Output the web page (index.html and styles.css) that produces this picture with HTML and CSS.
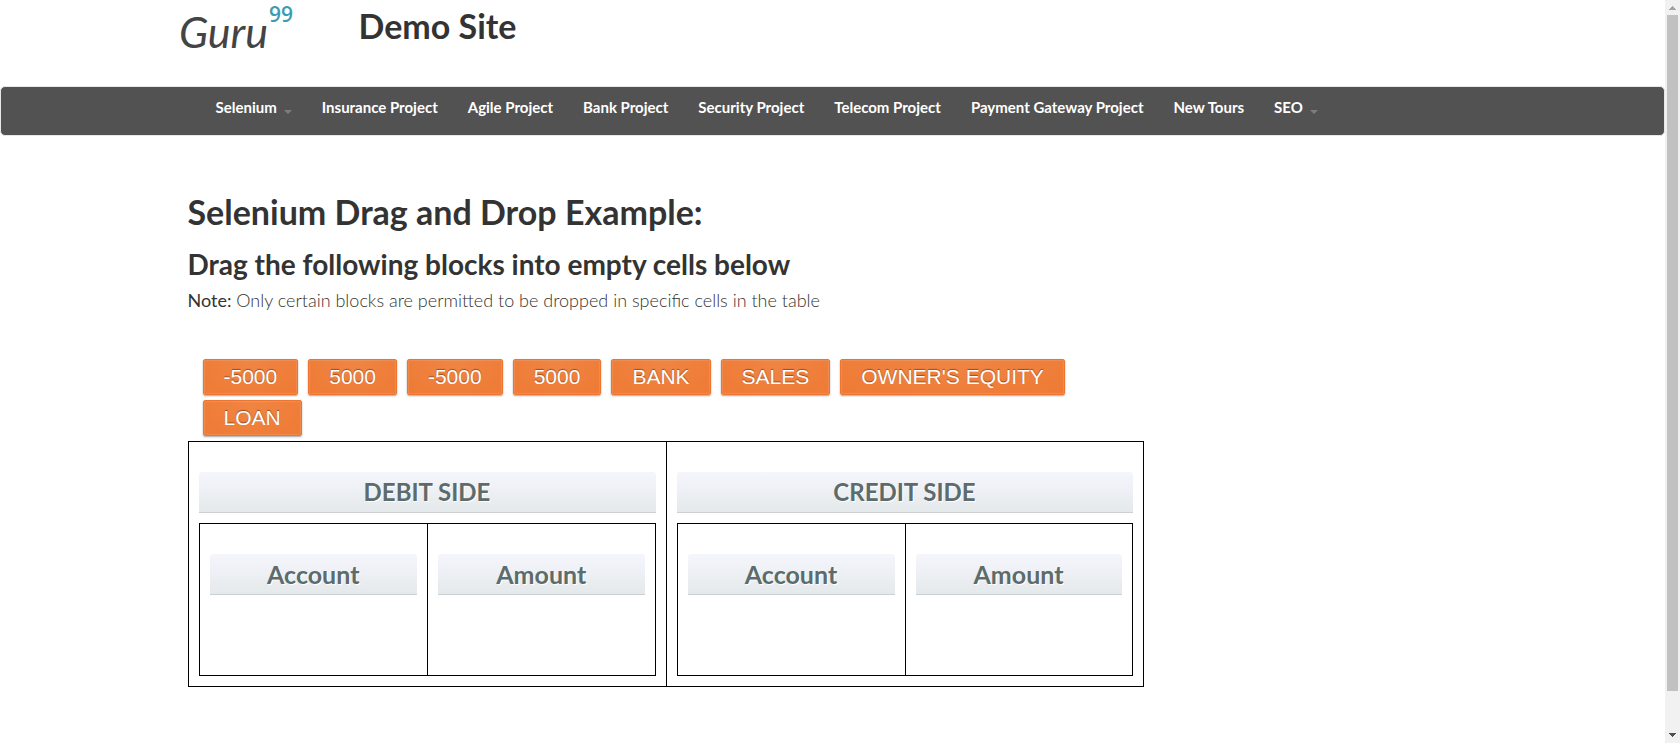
FILE: index.html
```html
<!DOCTYPE html>
<html lang="en">
<head>
<meta charset="utf-8">
<title>Demo Site</title>
<link rel="stylesheet" href="styles.css">
</head>
<body>
<div class="page">
  <header class="container masthead">
    <a class="logo" href="#" aria-label="Guru99">
      <svg width="120" height="56" viewBox="0 0 120 56">
        <text class="logo-word" x="0" y="48">Guru</text>
        <text class="logo-number" x="90" y="22">99</text>
      </svg>
    </a>
    <h2 class="site-title">Demo Site</h2>
  </header>
  <nav class="navbar">
    <ul class="container menu">
      <li><a class="dropdown" href="#">Selenium</a></li>
      <li><a href="#">Insurance Project</a></li>
      <li><a href="#">Agile Project</a></li>
      <li><a href="#">Bank Project</a></li>
      <li><a href="#">Security Project</a></li>
      <li><a href="#">Telecom Project</a></li>
      <li><a href="#">Payment Gateway Project</a></li>
      <li><a href="#">New Tours</a></li>
      <li><a class="dropdown" href="#">SEO</a></li>
    </ul>
  </nav>
  <main class="container content">
    <h1>Selenium Drag and Drop Example:</h1>
    <h2>Drag the following blocks into empty cells below</h2>
    <p class="note"><b>Note:</b> Only certain blocks are permitted to be dropped in specific cells in the table</p>
    <div class="exercise">
      <ul class="blocks">
        <li><a class="block" href="#">-5000</a></li>
        <li><a class="block" href="#">5000</a></li>
        <li><a class="block" href="#">-5000</a></li>
        <li><a class="block" href="#">5000</a></li>
        <li><a class="block" href="#">BANK</a></li>
        <li><a class="block" href="#">SALES</a></li>
        <li><a class="block" href="#">OWNER'S EQUITY</a></li>
        <li><a class="block" href="#">LOAN</a></li>
      </ul>
      <div class="ledger">
        <section class="side">
          <h3 class="bar">DEBIT SIDE</h3>
          <table class="entries">
            <thead><tr><th><div class="bar">Account</div></th><th><div class="bar">Amount</div></th></tr></thead>
            <tbody><tr><td></td><td></td></tr></tbody>
          </table>
        </section>
        <section class="side">
          <h3 class="bar">CREDIT SIDE</h3>
          <table class="entries">
            <thead><tr><th><div class="bar">Account</div></th><th><div class="bar">Amount</div></th></tr></thead>
            <tbody><tr><td></td><td></td></tr></tbody>
          </table>
        </section>
      </div>
    </div>
  </main>
</div>
<div class="scrollbar" aria-hidden="true">
  <svg width="7" height="4" viewBox="0 0 7 4"><path fill="#a3a3a3" d="M3 0h1v1h1v1h1v1h1v1H0V3h1V2h1V1h1z"/></svg>
  <div class="thumb"></div>
  <svg width="7" height="4" viewBox="0 0 7 4"><path fill="#505050" d="M0 0h7v1H6v1H5v1H4v1H3V3H2V2H1V1H0z"/></svg>
</div>
</body>
</html>
```
FILE: styles.css
```css
* { box-sizing: border-box; }

body {
  margin: 0;
  display: flex;
  min-height: 100vh;
  background: #fff;
  color: #333;
  font-family: Lato, "Open Sans", sans-serif;
}

h1, h2, h3, p, ul { margin: 0; padding: 0; }
ul { list-style: none; }
a { text-decoration: none; }

.page { flex: 1; min-width: 0; }

.container {
  width: 100%;
  max-width: 1290px;
  margin: 0 auto;
}

.masthead {
  display: flex;
  align-items: flex-start;
  height: 86px;
}

.logo {
  width: 180px;
  margin-left: -9px;
}
.logo svg { display: block; }
.logo-word { font: italic 43px Lato, sans-serif; fill: #444; }
.logo-number { font: 600 21px "Open Sans", sans-serif; fill: #3b9db3; }

.site-title {
  padding-top: 6px;
  font-size: 34px;
  line-height: 40px;
}

.navbar {
  min-height: 50px;
  border: 1px solid #e7e7e7;
  border-radius: 5px;
  background: #525252;
}

.menu {
  display: flex;
  gap: 30px;
  padding: 10px 0 0 28px;
}

.menu a {
  display: flex;
  color: #fff;
  font-size: 15px;
  font-weight: bold;
  line-height: 20px;
  white-space: nowrap;
}

.dropdown::after {
  content: "";
  margin: 13px 0 0 7px;
  align-self: flex-start;
  border: 4px solid transparent;
  border-top-color: #7d7d7d;
  border-bottom: 0;
}

.content { padding-top: 56px; }

.content h1 { font-size: 34px; line-height: 40px; }
.content h2 { margin-top: 17px; font-size: 28px; line-height: 30px; }

.note {
  margin-top: 9px;
  font-size: 18px;
  font-weight: 300;
  line-height: 24px;
}

.exercise { width: 956px; max-width: 100%; margin-top: 47px; }

.blocks {
  display: flex;
  flex-wrap: wrap;
  gap: 5px 10px;
  padding: 0 15px 5px;
}

.block {
  display: block;
  padding: 0 20px;
  border: 1px solid #ec7631;
  border-radius: 2px;
  background: radial-gradient(ellipse at 50% 0, #f08544, #ee7a34);
  box-shadow: inset 0 0 1px 1px rgba(255, 255, 255, .12), 0 1px 2px rgba(0, 0, 0, .35);
  color: #fff;
  font-family: "Liberation Sans", Arial, sans-serif;
  font-size: 21px;
  line-height: 34px;
  text-shadow: 0 -1px 1px rgba(0, 0, 0, .4);
}

.ledger {
  display: grid;
  grid-template-columns: 1fr 1fr;
  border: 1px solid #000;
}

.side { padding: 30px 10px 10px; }
.side + .side { border-left: 1px solid #000; }

.bar {
  border-bottom: 1px solid #cdd0d2;
  border-radius: 3px 3px 0 0;
  background: linear-gradient(#f5f6fc, #e4e9eb);
  color: #5c6b6b;
  font-size: 25px;
  font-weight: bold;
  line-height: 40px;
  text-align: center;
  text-shadow: 1px 1px 0 #fff;
}
h3.bar { font-size: 24px; }

.entries {
  width: 100%;
  margin-top: 10px;
  border: 1px solid #000;
  border-spacing: 0;
  table-layout: fixed;
}
.entries th { padding: 30px 10px 0; }
.entries td { height: 80px; padding: 0; }
.entries th + th, .entries td + td { border-left: 1px solid #000; }

.scrollbar {
  display: flex;
  flex-direction: column;
  align-items: center;
  width: 15px;
  padding: 6px 0;
  background: #f1f1f1;
}
.thumb {
  width: 11px;
  height: 91vh;
  margin: 5px 0 auto;
  background: #c1c1c1;
}
```
